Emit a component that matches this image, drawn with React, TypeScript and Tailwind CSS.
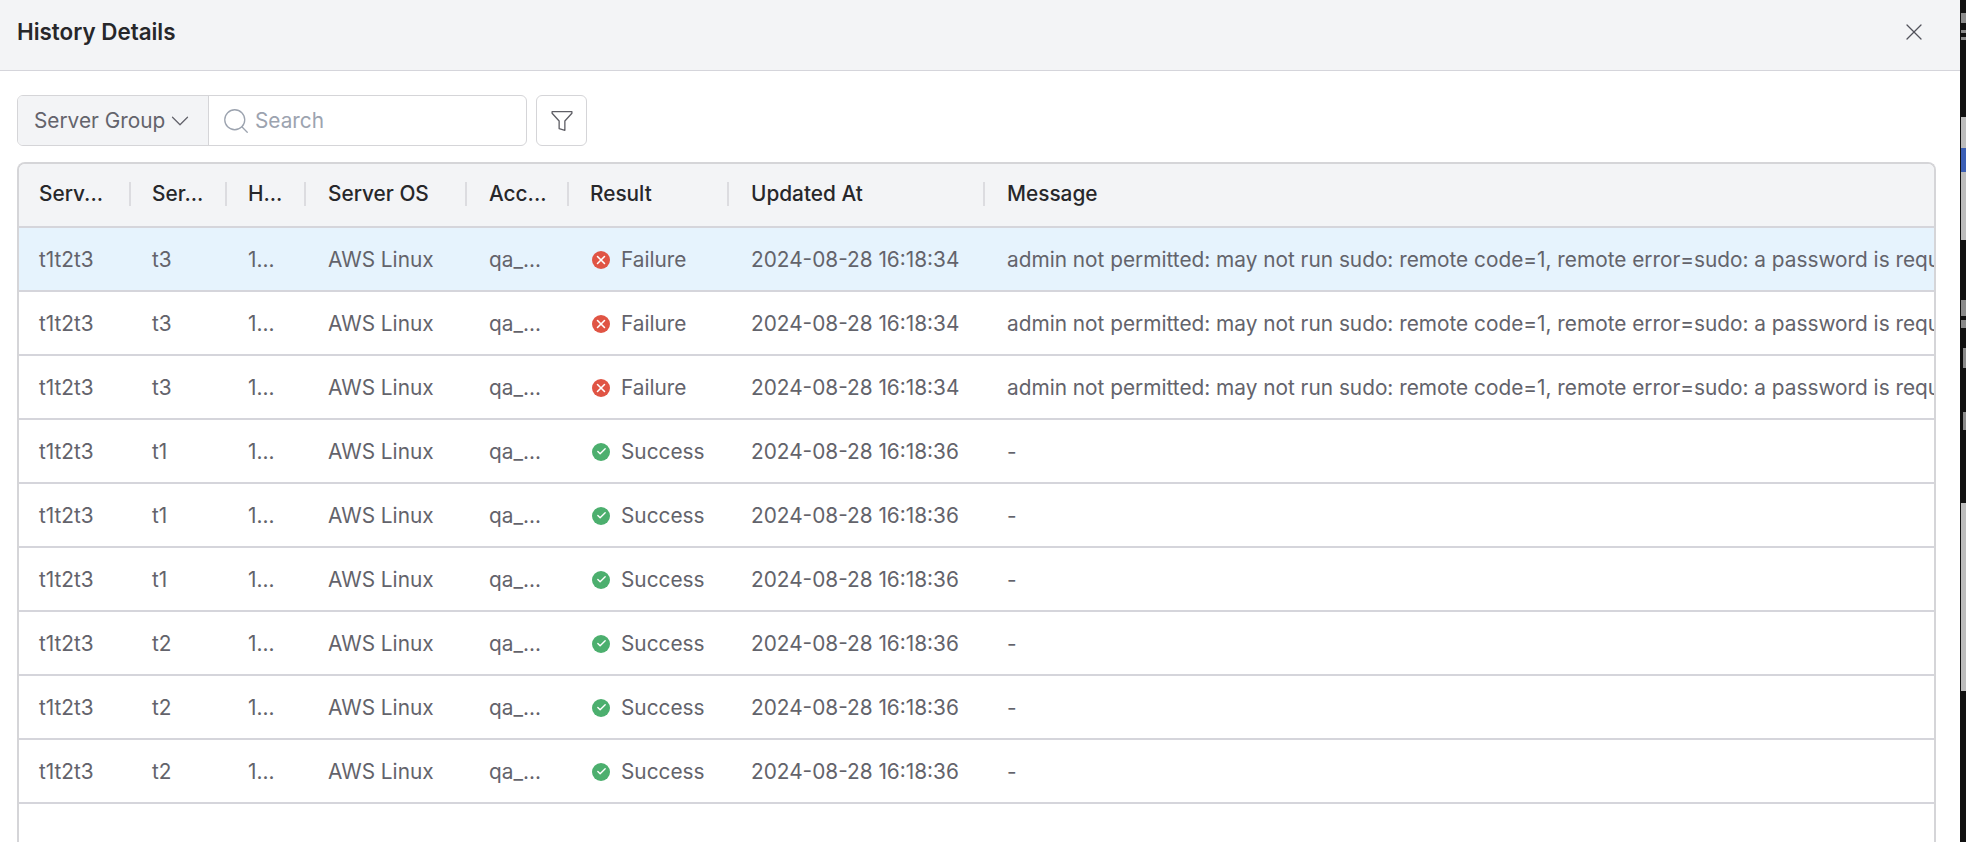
import React from "react";
import { ChevronDown, Search, X, Check } from "lucide-react";

const rows = [
  { group: "t3", ok: false, time: "2024-08-28 16:18:34" },
  { group: "t3", ok: false, time: "2024-08-28 16:18:34" },
  { group: "t3", ok: false, time: "2024-08-28 16:18:34" },
  { group: "t1", ok: true, time: "2024-08-28 16:18:36" },
  { group: "t1", ok: true, time: "2024-08-28 16:18:36" },
  { group: "t1", ok: true, time: "2024-08-28 16:18:36" },
  { group: "t2", ok: true, time: "2024-08-28 16:18:36" },
  { group: "t2", ok: true, time: "2024-08-28 16:18:36" },
  { group: "t2", ok: true, time: "2024-08-28 16:18:36" },
];

const message =
  "admin not permitted: may not run sudo: remote code=1, remote error=sudo: a password is required for this account";

const headers = [
  { label: "Serv...", cls: "pl-[20px]" },
  { label: "Ser...", cls: "border-l-2 border-[#dcdce0] pl-[21px]" },
  { label: "H...", cls: "border-l-2 border-[#dcdce0] pl-[21px]" },
  { label: "Server OS", cls: "border-l-2 border-[#dcdce0] pl-[22px]" },
  { label: "Acc...", cls: "border-l-2 border-[#dcdce0] pl-[22px]" },
  { label: "Result", cls: "border-l-2 border-[#dcdce0] pl-[21px]" },
  { label: "Updated At", cls: "border-l-2 border-[#dcdce0] pl-[22px]" },
  { label: "Message", cls: "border-l-2 border-[#dcdce0] pl-[22px]" },
];

const cols = "grid grid-cols-[110px_96px_79px_161px_102px_160px_256px_minmax(0,1fr)]";

const App = () => {
  return (
    <div className="flex h-[842px] overflow-hidden bg-[#111111] font-['Inter',sans-serif]">
      <div className="flex w-[1960px] flex-col bg-white">
        <div className="flex h-[71px] shrink-0 items-center justify-between border-b border-[#d5d5db] bg-[#f3f4f6] pb-[7px] pl-[17px] pr-[32px]">
          <h1 className="text-[22.4px] font-semibold text-[#27272a]">History Details</h1>
          <X className="h-[28px] w-[28px] text-[#52525b]" strokeWidth={1.1} />
        </div>

        <div className="flex min-h-0 flex-1 flex-col pl-[17px] pr-[24px] pt-[24px]">
          <div className="flex h-[51px] shrink-0 gap-[9px]">
            <div className="flex w-[510px] overflow-hidden rounded-[6px] border border-[#d5d5d8]">
              <div className="flex w-[191px] items-center border-r border-[#d5d5d8] bg-[#f3f4f6] pl-[16px] text-[20.8px] text-[#63636b]">
                Server Group
                <ChevronDown className="h-[30px] w-[30px]" strokeWidth={1} />
              </div>
              <div className="flex flex-1 items-center gap-[4px] pl-[12px] text-[20.8px] text-[#9ca3af]">
                <Search className="h-[30px] w-[30px]" strokeWidth={1.05} />
                Search
              </div>
            </div>
            <div className="flex w-[51px] items-center justify-center rounded-[6px] border border-[#d5d5d8]">
              {/* funnel with a longer, narrower stem than the lucide one */}
              <svg viewBox="0 0 20 20" fill="none" className="h-[22px] w-[22px] text-[#5f5f66]" stroke="currentColor" strokeWidth={1.2} strokeLinejoin="round">
                <path d="M1 1.5h18v1.5l-6.4 7v8.5l-5.2-1.6v-6.900l-6.400-7z" />
              </svg>
            </div>
          </div>

          <div className="mt-[16px] min-h-0 flex-1 overflow-hidden rounded-t-[8px] border-x-2 border-t-2 border-[#d5d5d8]">
            <div className={`${cols} h-[64px] items-center border-b-2 border-[#d5d5db] bg-[#f3f4f6] pb-[3px]`}>
              {headers.map((h) => (
                <div key={h.label} className={`flex h-[24px] items-center text-[20.8px] font-medium text-[#27272a] ${h.cls}`}>
                  {h.label}
                </div>
              ))}
            </div>
            {rows.map((r, i) => (
              <div
                key={i}
                className={`${cols} h-[64px] items-center border-b-2 border-[#d5d5db] pt-[1px] text-[20.8px] text-[#63636b] ${i === 0 ? "bg-[#e6f3fd]" : "bg-white"}`}
              >
                <div className="pl-[20px]">t1t2t3</div>
                <div className="pl-[23px]">{r.group}</div>
                <div className="pl-[23px]">1...</div>
                <div className="pl-[24px]">AWS Linux</div>
                <div className="pl-[24px]">qa_...</div>
                <div className="flex items-center gap-[11px] pl-[25px]">
                  <span className={`flex h-[18px] w-[18px] shrink-0 items-center justify-center rounded-full ${r.ok ? "bg-[#4caf6e]" : "bg-[#e05444]"}`}>
                    {r.ok ? (
                      <Check className="h-[11px] w-[11px] text-white" strokeWidth={3} />
                    ) : (
                      <X className="h-[14px] w-[14px] text-white" strokeWidth={2.6} />
                    )}
                  </span>
                  {r.ok ? "Success" : "Failure"}
                </div>
                <div className="pl-[24px]">{r.time}</div>
                <div className="overflow-hidden whitespace-nowrap pl-[24px]">{r.ok ? "-" : message}</div>
              </div>
            ))}
          </div>
        </div>
      </div>

      {/* sliver of the window behind the dialog */}
      <div className="flex w-[6px] flex-col bg-[#111111] pl-[1px]">
        <div className="mt-[13px] h-[10px] bg-[#8a8a8a]" />
        <div className="mt-[7px] h-[3px] bg-[#8a8a8a]" />
        <div className="mt-[4px] h-[3px] bg-[#8a8a8a]" />
        <div className="mt-[77px] h-[31px] bg-[#bcbcbc]" />
        <div className="h-[24px] bg-[#3b5fb5]" />
        <div className="h-[68px] bg-[#bcbcbc]" />
        <div className="mt-[60px] h-[16px] bg-[#8a8a8a]" />
        <div className="mt-[4px] h-[8px] bg-[#8a8a8a]" />
        <div className="ml-[2px] mt-[20px] h-[20px] w-[3px] bg-[#8a8a8a]" />
        <div className="ml-[2px] mt-[44px] h-[18px] w-[3px] bg-[#8a8a8a]" />
        <div className="mt-[73px] h-[188px] bg-[#bcbcbc]" />
      </div>
    </div>
  );
};

export default App;
